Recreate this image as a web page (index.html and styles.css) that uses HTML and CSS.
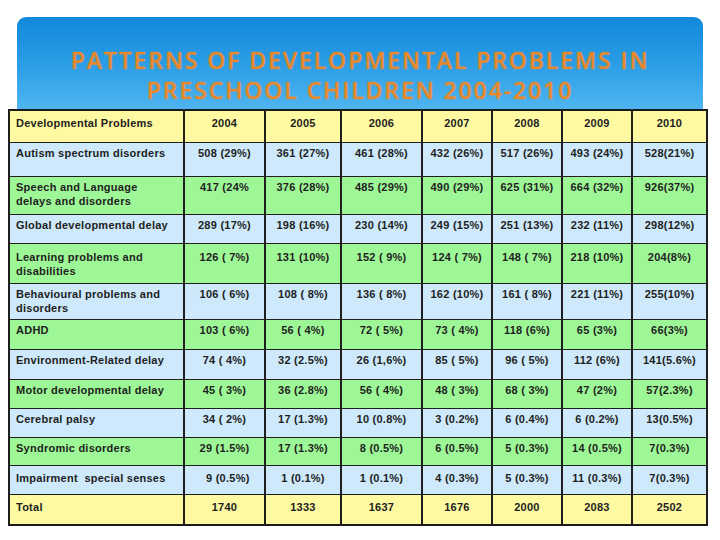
FILE: index.html
```html
<!DOCTYPE html>
<html>
<head>
<meta charset="utf-8">
<link rel="stylesheet" href="styles.css">
</head>
<body>
<div class="slide">
  <div class="banner">
    <h1 class="title">PATTERNS OF DEVELOPMENTAL PROBLEMS IN<br>PRESCHOOL CHILDREN 2004-2010</h1>
  </div>
  <table class="data">
    <colgroup>
      <col class="c-name"><col class="c-a"><col class="c-b"><col class="c-a"><col class="c-c"><col class="c-c"><col class="c-c"><col class="c-d">
    </colgroup>
    <tr class="yellow"><td class="name">Developmental Problems</td><td>2004</td><td>2005</td><td>2006</td><td>2007</td><td>2008</td><td>2009</td><td>2010</td></tr>
    <tr class="blue"><td class="name">Autism spectrum disorders</td><td>508 (29%)</td><td>361 (27%)</td><td>461 (28%)</td><td>432 (26%)</td><td>517 (26%)</td><td>493 (24%)</td><td>528(21%)</td></tr>
    <tr class="green"><td class="name">Speech and Language delays and disorders</td><td>417 (24%</td><td>376 (28%)</td><td>485 (29%)</td><td>490 (29%)</td><td>625 (31%)</td><td>664 (32%)</td><td>926(37%)</td></tr>
    <tr class="blue"><td class="name">Global developmental delay</td><td>289 (17%)</td><td>198 (16%)</td><td>230 (14%)</td><td>249 (15%)</td><td>251 (13%)</td><td>232 (11%)</td><td>298(12%)</td></tr>
    <tr class="green"><td class="name">Learning problems and disabilities</td><td>126 ( 7%)</td><td>131 (10%)</td><td>152 ( 9%)</td><td>124 ( 7%)</td><td>148 ( 7%)</td><td>218 (10%)</td><td>204(8%)</td></tr>
    <tr class="blue"><td class="name">Behavioural problems and disorders</td><td>106 ( 6%)</td><td>108 ( 8%)</td><td>136 ( 8%)</td><td>162 (10%)</td><td>161 ( 8%)</td><td>221 (11%)</td><td>255(10%)</td></tr>
    <tr class="green"><td class="name">ADHD</td><td>103 ( 6%)</td><td>56 ( 4%)</td><td>72 ( 5%)</td><td>73 ( 4%)</td><td>118 (6%)</td><td>65 (3%)</td><td>66(3%)</td></tr>
    <tr class="blue"><td class="name">Environment-Related delay</td><td>74 ( 4%)</td><td>32 (2.5%)</td><td>26 (1,6%)</td><td>85 ( 5%)</td><td>96 ( 5%)</td><td>112 (6%)</td><td>141(5.6%)</td></tr>
    <tr class="green"><td class="name">Motor developmental delay</td><td>45 ( 3%)</td><td>36 (2.8%)</td><td>56 ( 4%)</td><td>48 ( 3%)</td><td>68 ( 3%)</td><td>47 (2%)</td><td>57(2.3%)</td></tr>
    <tr class="blue"><td class="name">Cerebral palsy</td><td>34 ( 2%)</td><td>17 (1.3%)</td><td>10 (0.8%)</td><td>3 (0.2%)</td><td>6 (0.4%)</td><td>6 (0.2%)</td><td>13(0.5%)</td></tr>
    <tr class="green"><td class="name">Syndromic disorders</td><td>29 (1.5%)</td><td>17 (1.3%)</td><td>8 (0.5%)</td><td>6 (0.5%)</td><td>5 (0.3%)</td><td>14 (0.5%)</td><td>7(0.3%)</td></tr>
    <tr class="blue"><td class="name">Impairment&nbsp; special senses</td><td>&nbsp; 9 (0.5%)</td><td>1 (0.1%)</td><td>1 (0.1%)</td><td>4 (0.3%)</td><td>5 (0.3%)</td><td>11 (0.3%)</td><td>7(0.3%)</td></tr>
    <tr class="yellow"><td class="name">Total</td><td>1740</td><td>1333</td><td>1637</td><td>1676</td><td>2000</td><td>2083</td><td>2502</td></tr>
  </table>
</div>
</body>
</html>
```

FILE: styles.css
```css
html, body {
  margin: 0;
  padding: 0;
  background: #ffffff;
}
.slide {
  width: 720px;
  height: 540px;
  padding-top: 17px;
  box-sizing: border-box;
  overflow: hidden;
}
.banner {
  margin-left: 17px;
  width: 686px;
  height: 92px;
  border-radius: 9px 9px 0 0;
  background: linear-gradient(to bottom, #1388da 0%, #2a9de6 50%, #4fb5f1 100%);
  box-sizing: border-box;
  padding-top: 28px;
}
.title {
  margin: 0;
  text-align: center;
  font-family: "Open Sans", Lato, sans-serif;
  font-weight: 600;
  font-size: 23px;
  line-height: 30px;
  letter-spacing: 1.9px;
  color: #e8882a;
  text-shadow: 0 0 2px rgba(240, 150, 60, 0.6);
}
.data {
  margin-left: 8px;
  width: 698px;
  table-layout: fixed;
  border-collapse: collapse;
  border: 2px solid #1a1a1a;
  font-family: "Liberation Sans", Arial, sans-serif;
  font-weight: bold;
  font-size: 11px;
  line-height: 14px;
  letter-spacing: 0.25px;
  color: #1e1e1e;
}
.c-name { width: 175px; }
.c-a { width: 81px; }
.c-b { width: 76px; }
.c-c { width: 70px; }
.c-d { width: 75px; }
.data td {
  border: 1px solid #1f1f1f;
  border-left-width: 2px;
  border-right-width: 2px;
  padding: 3px 4px 0 4px;
  vertical-align: top;
  text-align: center;
  white-space: pre-wrap;
}
.data td.name {
  text-align: left;
  padding-left: 6px;
  padding-right: 14px;
  white-space: normal;
}
.yellow td { background: #fffaa2; }
.blue td { background: #cde9fb; }
.green td { background: #9ef797; }

.data tr:nth-child(1) { height: 32px; }
.data tr:nth-child(1) td { padding-top: 5px; }
.data tr:nth-child(2) { height: 34px; }
.data tr:nth-child(3) { height: 38px; }
.data tr:nth-child(4) { height: 29px; }
.data tr:nth-child(5) { height: 40px; }
.data tr:nth-child(5) td { padding-top: 6px; }
.data tr:nth-child(6) { height: 36px; }
.data tr:nth-child(7) { height: 30px; }
.data tr:nth-child(8) { height: 30px; }
.data tr:nth-child(9) { height: 29px; }
.data tr:nth-child(10) { height: 29px; }
.data tr:nth-child(11) { height: 28px; }
.data tr:nth-child(12) { height: 29px; }
.data tr:nth-child(12) td { padding-top: 5px; }
.data tr:nth-child(13) { height: 31px; }
.data tr:nth-child(13) td { padding-top: 5px; }
```
